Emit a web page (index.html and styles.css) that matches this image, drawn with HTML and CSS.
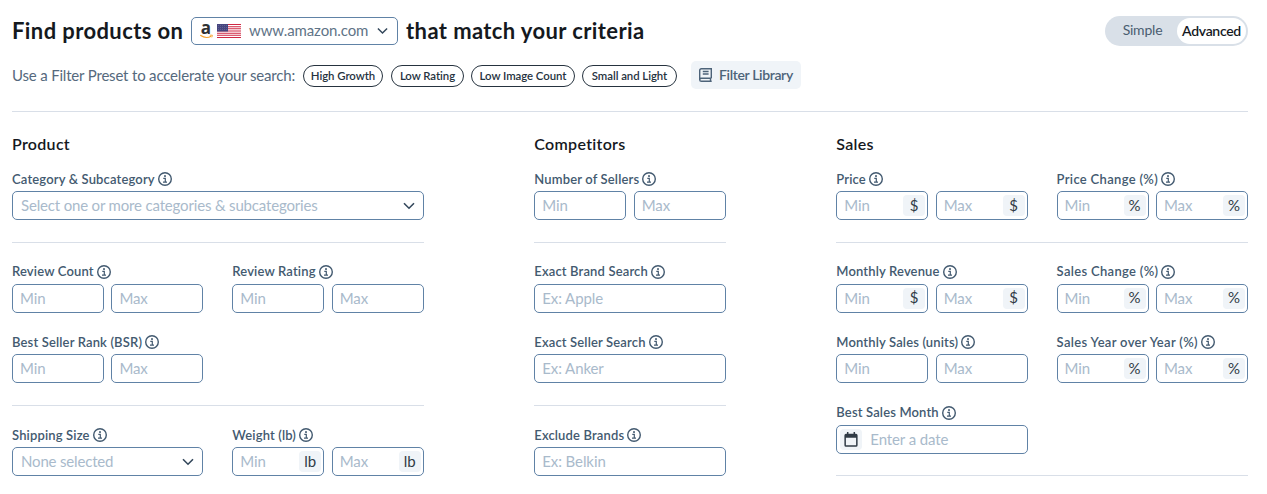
FILE: index.html
```html
<!DOCTYPE html>
<html lang="en">
<head>
  <meta charset="UTF-8" />
  <meta name="viewport" content="width=device-width, initial-scale=1.0" />
  <title>Product Finder</title>
  <link rel="stylesheet" href="styles.css">
</head>
<body>
  <svg class="sprite" aria-hidden="true">
    <symbol id="info" viewBox="0 0 14 14">
      <circle cx="7" cy="7" r="6.3" fill="none" stroke="currentColor" stroke-width="1.4" />
      <rect x="6.1" y="3.2" width="1.8" height="1.7" fill="currentColor" />
      <path d="M5.3 6.3h2v3.6M5 10.1h4" fill="none" stroke="currentColor" stroke-width="1.2" />
    </symbol>
    <symbol id="chevron" viewBox="0 0 12 8">
      <path d="M1 1.2l5 5 5-5" fill="none" stroke="currentColor" stroke-width="1.6" />
    </symbol>
  </svg>

  <header>
    <div class="title-row">
      <h1>Find products on</h1>
      <button class="marketplace">
        <svg class="amazon" width="14" height="16" viewBox="0 0 14 16">
          <text x="6" y="11.3" text-anchor="middle">a</text>
          <path d="M.3 12.3Q6 16.2 11.2 13.2" fill="none" stroke="#f6a12b" stroke-width="1.2" />
          <path d="M9.8 12.2h2.6l-.6 2.2" fill="none" stroke="#f6a12b" stroke-width=".9" />
        </svg>
        <svg class="flag" width="24" height="14" viewBox="0 0 24 14">
          <rect width="24" height="14" fill="#fff" />
          <path d="M0 .5h24M0 2.7h24M0 4.8h24M0 7h24M0 9.2h24M0 11.3h24M0 13.5h24" stroke="#d02844" stroke-width="1.08" />
          <rect width="11" height="7.5" fill="#46467f" />
          <path d="M1 1.5h9M1 3.5h9M1 5.5h9" stroke="#74749f" stroke-width=".6" stroke-dasharray="1 1" />
        </svg>
        <span class="domain">www.amazon.com</span>
        <svg class="chevron" width="11" height="8"><use href="#chevron" /></svg>
      </button>
      <h1 class="title-end">that match your criteria</h1>
      <div class="toggle">
        <span class="simple">Simple</span>
        <span class="active">Advanced</span>
      </div>
    </div>

    <div class="presets">
      <span class="hint">Use a Filter Preset to accelerate your search:</span>
      <button class="pill growth">High Growth</button>
      <button class="pill rating">Low Rating</button>
      <button class="pill images">Low Image Count</button>
      <button class="pill light">Small and Light</button>
      <button class="library">
        <svg width="13" height="14" viewBox="0 0 13 14" fill="none" stroke="currentColor" stroke-width="1.4">
          <path d="M12.3 10.2V.7H2.4Q.7.7.7 2.4v9.3q0 1.6 1.7 1.6h10.3M.7 11.7q0-1.5 1.7-1.5h9.9M11.5 10.2v3" />
          <path d="M3.8 3.5h5.8M3.8 6h5.8" />
        </svg>
        <span>Filter Library</span>
      </button>
    </div>
  </header>

  <main>
    <div class="column">
      <h2>Product</h2>
      <section>
        <div class="field wide">
          <label><span>Category &amp; Subcategory</span><svg class="info"><use href="#info" /></svg></label>
          <div class="box select"><span>Select one or more categories &amp; subcategories</span><svg class="chevron" width="12" height="8"><use href="#chevron" /></svg></div>
        </div>
      </section>
      <section>
        <div class="field">
          <label><span>Review Count</span><svg class="info"><use href="#info" /></svg></label>
          <div class="range">
            <div class="box"><input placeholder="Min"></div>
            <div class="box"><input placeholder="Max"></div>
          </div>
        </div>
        <div class="field">
          <label><span>Review Rating</span><svg class="info"><use href="#info" /></svg></label>
          <div class="range">
            <div class="box"><input placeholder="Min"></div>
            <div class="box"><input placeholder="Max"></div>
          </div>
        </div>
        <div class="field">
          <label><span>Best Seller Rank (BSR)</span><svg class="info"><use href="#info" /></svg></label>
          <div class="range">
            <div class="box"><input placeholder="Min"></div>
            <div class="box"><input placeholder="Max"></div>
          </div>
        </div>
      </section>
      <section>
        <div class="field">
          <label><span>Shipping Size</span><svg class="info"><use href="#info" /></svg></label>
          <div class="box select"><span>None selected</span><svg class="chevron" width="12" height="8"><use href="#chevron" /></svg></div>
        </div>
        <div class="field">
          <label><span>Weight (lb)</span><svg class="info"><use href="#info" /></svg></label>
          <div class="range">
            <div class="box"><input placeholder="Min"><span class="unit">lb</span></div>
            <div class="box"><input placeholder="Max"><span class="unit">lb</span></div>
          </div>
        </div>
      </section>
    </div>

    <div class="column narrow">
      <h2>Competitors</h2>
      <section>
        <div class="field">
          <label><span>Number of Sellers</span><svg class="info"><use href="#info" /></svg></label>
          <div class="range">
            <div class="box"><input placeholder="Min"></div>
            <div class="box"><input placeholder="Max"></div>
          </div>
        </div>
      </section>
      <section>
        <div class="field">
          <label><span>Exact Brand Search</span><svg class="info"><use href="#info" /></svg></label>
          <div class="box"><input placeholder="Ex: Apple"></div>
        </div>
        <div class="field">
          <label><span>Exact Seller Search</span><svg class="info"><use href="#info" /></svg></label>
          <div class="box"><input placeholder="Ex: Anker"></div>
        </div>
      </section>
      <section>
        <div class="field">
          <label><span>Exclude Brands</span><svg class="info"><use href="#info" /></svg></label>
          <div class="box"><input placeholder="Ex: Belkin"></div>
        </div>
      </section>
    </div>

    <div class="column">
      <h2>Sales</h2>
      <section>
        <div class="field">
          <label><span>Price</span><svg class="info"><use href="#info" /></svg></label>
          <div class="range">
            <div class="box"><input placeholder="Min"><span class="unit">$</span></div>
            <div class="box"><input placeholder="Max"><span class="unit">$</span></div>
          </div>
        </div>
        <div class="field">
          <label class="percent"><span>Price Change (%)</span><svg class="info"><use href="#info" /></svg></label>
          <div class="range">
            <div class="box"><input placeholder="Min"><span class="unit">%</span></div>
            <div class="box"><input placeholder="Max"><span class="unit">%</span></div>
          </div>
        </div>
      </section>
      <section>
        <div class="field">
          <label><span>Monthly Revenue</span><svg class="info"><use href="#info" /></svg></label>
          <div class="range">
            <div class="box"><input placeholder="Min"><span class="unit">$</span></div>
            <div class="box"><input placeholder="Max"><span class="unit">$</span></div>
          </div>
        </div>
        <div class="field">
          <label class="percent"><span>Sales Change (%)</span><svg class="info"><use href="#info" /></svg></label>
          <div class="range">
            <div class="box"><input placeholder="Min"><span class="unit">%</span></div>
            <div class="box"><input placeholder="Max"><span class="unit">%</span></div>
          </div>
        </div>
        <div class="field">
          <label><span>Monthly Sales (units)</span><svg class="info"><use href="#info" /></svg></label>
          <div class="range">
            <div class="box"><input placeholder="Min"></div>
            <div class="box"><input placeholder="Max"></div>
          </div>
        </div>
        <div class="field">
          <label class="percent"><span>Sales Year over Year (%)</span><svg class="info"><use href="#info" /></svg></label>
          <div class="range">
            <div class="box"><input placeholder="Min"><span class="unit">%</span></div>
            <div class="box"><input placeholder="Max"><span class="unit">%</span></div>
          </div>
        </div>
        <div class="field">
          <label><span>Best Sales Month</span><svg class="info"><use href="#info" /></svg></label>
          <div class="box date">
            <span class="unit">
              <svg width="14" height="15" viewBox="0 0 14 15">
                <path d="M2 1.8h10q1.6 0 1.6 1.6v9.8q0 1.6-1.6 1.6H2Q.4 14.8.4 13.2V3.4Q.4 1.8 2 1.8zM1.9 5.7v7.6h10.2V5.7z" fill="currentColor" fill-rule="evenodd" />
                <path d="M3.7 0v3M10.3 0v3" stroke="currentColor" stroke-width="1.5" />
              </svg>
            </span>
            <input placeholder="Enter a date">
          </div>
        </div>
      </section>
      <section></section>
    </div>
  </main>
</body>
</html>
```

FILE: styles.css
```css
* {
  box-sizing: border-box;
}

body {
  font-family: Lato, "Open Sans", sans-serif;
  margin: 0;
  padding: 16px 19px 0 12px;
  background: #fff;
  color: #15191e;
  height: 494px;
  overflow: hidden;
}

button, input {
  font-family: inherit;
  margin: 0;
}

.sprite {
  display: none;
}

svg {
  flex: none;
}

header {
  height: 96px;
  border-bottom: 1px solid #d9dfe8;
}

.title-row {
  display: flex;
  align-items: center;
  height: 30px;
}

h1 {
  width: 179px;
  margin: 0;
  font-size: 22px;
  line-height: 30px;
  font-weight: bold;
  letter-spacing: 0.4px;
  white-space: nowrap;
}

.title-end {
  width: auto;
  margin-left: 8px;
}

.marketplace {
  display: flex;
  align-items: center;
  width: 207px;
  height: 28px;
  padding: 0 9px 0 8px;
  background: #fff;
  border: 1px solid #6082a6;
  border-radius: 5px;
  color: #33475b;
}

.amazon {
  overflow: visible;
}

.amazon text {
  font: bold 17px "Open Sans", sans-serif;
  fill: #2e3133;
}

.flag {
  margin-left: 3px;
}

.domain {
  width: 120px;
  margin-left: 8px;
  padding-bottom: 2px;
  font-size: 15px;
  letter-spacing: -0.1px;
  color: #5f7487;
  text-align: left;
}

.marketplace .chevron {
  margin-left: auto;
}

.toggle {
  display: flex;
  align-items: center;
  width: 143px;
  height: 30px;
  margin-left: auto;
  padding: 2px;
  background: #d9e0e8;
  border-radius: 15px;
  font-size: 14px;
  text-align: center;
}

.simple {
  width: 70px;
  padding: 0 0 2px 1px;
  line-height: 24px;
  letter-spacing: -0.2px;
  color: #4a5d70;
}

.active {
  width: 69px;
  padding-bottom: 1px;
  background: #fff;
  border-radius: 13px;
  font-weight: 600;
  line-height: 25px;
  letter-spacing: -0.3px;
}

.presets {
  display: flex;
  align-items: center;
  height: 28px;
  margin-top: 15px;
}

.hint {
  width: 291px;
  padding-bottom: 1px;
  font-size: 15px;
  letter-spacing: -0.18px;
  color: #55697d;
  white-space: nowrap;
}

.pill {
  height: 22px;
  margin: 2px 8px 0 0;
  padding: 0 0 1px;
  background: #fff;
  border: 1px solid #26333f;
  border-radius: 11px;
  font-size: 11.4px;
  font-weight: 600;
  line-height: 17px;
  letter-spacing: -0.05px;
  color: #26333f;
  white-space: nowrap;
}

.growth {
  width: 80px;
}

.rating {
  width: 73px;
  margin-right: 7px;
}

.images {
  width: 104px;
  margin-right: 7px;
}

.light {
  width: 95px;
  margin-right: 14px;
}

.library {
  display: flex;
  align-items: center;
  gap: 7px;
  width: 110px;
  height: 28px;
  padding: 0 0 0 8px;
  background: #f0f4f8;
  border: none;
  border-radius: 5px;
  font-size: 14px;
  font-weight: 600;
  letter-spacing: -0.35px;
  color: #4d6379;
  white-space: nowrap;
}

.library span {
  padding-bottom: 2px;
}

main {
  display: flex;
  justify-content: space-between;
  padding-top: 22px;
}

.column {
  width: 411.7px;
}

.narrow {
  width: 191.4px;
}

h2 {
  margin: 0 0 15px;
  font-size: 16px;
  line-height: 20px;
  font-weight: 600;
  letter-spacing: 0.3px;
}

section {
  display: flex;
  flex-wrap: wrap;
  gap: 19.4px 29px;
  padding-bottom: 21.6px;
}

section + section {
  padding-top: 19.4px;
  border-top: 1px solid #d9dfe8;
}

.field {
  width: 191.3px;
}

.wide {
  width: 100%;
}

label {
  display: flex;
  align-items: center;
  gap: 3px;
  height: 20px;
  margin-bottom: 2px;
  font-size: 13px;
  font-weight: 600;
  letter-spacing: 0.15px;
  color: #435a70;
  white-space: nowrap;
}

.percent {
  letter-spacing: 0.32px;
}

label span {
  padding-bottom: 1px;
}

.info {
  width: 14px;
  height: 14px;
}

.range {
  display: flex;
  gap: 7.5px;
}

.box {
  display: flex;
  align-items: center;
  flex: 1;
  min-width: 0;
  height: 29px;
  padding: 0 2px 0 7px;
  border: 1px solid #6082a6;
  border-radius: 5px;
}

.box input {
  flex: 1;
  min-width: 0;
  padding: 0 0 1px;
  border: none;
  outline: none;
  background: none;
  font-size: 15px;
  letter-spacing: -0.1px;
}

.box input::placeholder, .select {
  color: #a9bacb;
}

.select {
  justify-content: space-between;
  padding: 0 8px;
  font-size: 15px;
  letter-spacing: -0.17px;
  white-space: nowrap;
}

.select span {
  padding-bottom: 2px;
}

.select .chevron {
  color: #33475b;
}

.unit {
  display: flex;
  align-items: center;
  justify-content: center;
  width: 22px;
  height: 21px;
  padding-bottom: 2px;
  background: #f0f4f8;
  border-radius: 4px;
  font-size: 15px;
  color: #303b46;
}

.date {
  padding-left: 3px;
}

.date .unit {
  padding-bottom: 0;
}

.date input {
  margin-left: 8px;
}
```
